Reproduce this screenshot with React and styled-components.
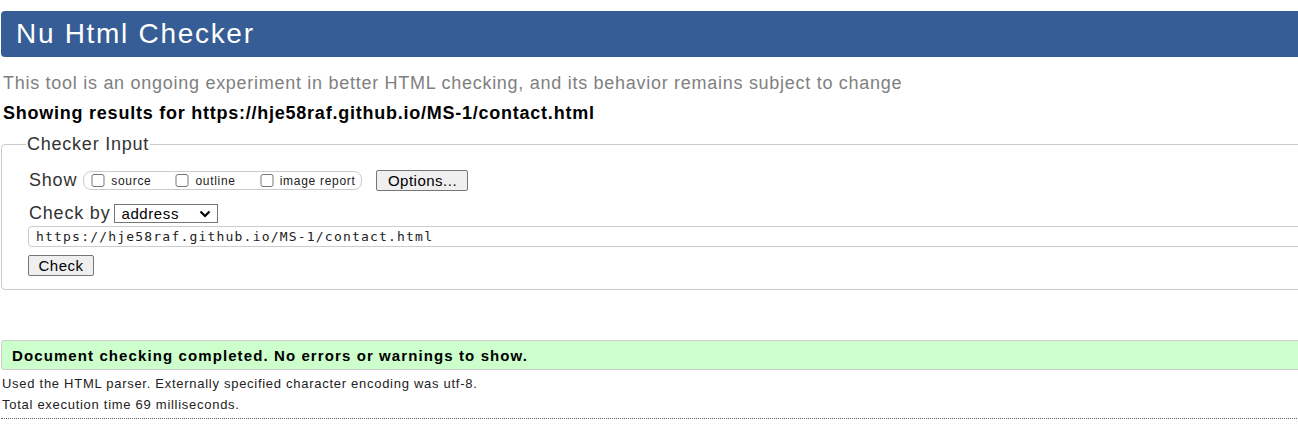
import styled, { createGlobalStyle } from "styled-components";

const GlobalStyle = createGlobalStyle`
  html, body {
    margin: 0;
    padding: 0;
    background: #fff;
    overflow: hidden;
  }
  body {
    font-family: "Liberation Sans", Arial, sans-serif;
    color: #000;
  }
`;

const chevron =
  "data:image/svg+xml;utf8," +
  encodeURIComponent(
    '<svg xmlns="http://www.w3.org/2000/svg" width="12" height="8" viewBox="0 0 12 8"><path d="M1.5 1.5 L6 6 L10.5 1.5" fill="none" stroke="#000" stroke-width="2.2"/></svg>'
  );

export default function App() {
  return (
    <>
      <GlobalStyle />
      <Page>
        <Header>
          <h1>Nu Html Checker</h1>
        </Header>
        <Intro>
          This tool is an ongoing experiment in better HTML checking, and its
          behavior remains subject to change
        </Intro>
        <ResultsFor>
          Showing results for https://hje58raf.github.io/MS-1/contact.html
        </ResultsFor>
        <InputFieldset>
          <legend>Checker Input</legend>
          <Row>
            <Label>Show</Label>
            <ShowGroup>
              <Check>
                <input type="checkbox" />
                source
              </Check>
              <Check>
                <input type="checkbox" />
                outline
              </Check>
              <Check>
                <input type="checkbox" />
                image report
              </Check>
            </ShowGroup>
            <Button $width={92}>Options...</Button>
          </Row>
          <Row $top={13} $gap={4}>
            <Label>Check by</Label>
            <Select defaultValue="address">
              <option value="address">address</option>
            </Select>
          </Row>
          <UrlInput defaultValue="https://hje58raf.github.io/MS-1/contact.html" />
          <Row $top={8}>
            <Button $width={66}>Check</Button>
          </Row>
        </InputFieldset>
        <Success>Document checking completed. No errors or warnings to show.</Success>
        <Details>
          <p>Used the HTML parser. Externally specified character encoding was utf-8.</p>
          <p>Total execution time 69 milliseconds.</p>
        </Details>
      </Page>
    </>
  );
}

const Page = styled.div`
  width: 1340px;
  padding: 11px 0 0 1px;
`;

const Header = styled.div`
  background-color: #365d95;
  height: 46px;
  border-radius: 4px;
  display: flex;
  align-items: center;
  padding-left: 15px;
  h1 {
    margin: 0;
    font-size: 28px;
    letter-spacing: 1.7px;
    font-weight: normal;
    color: #fff;
    line-height: 1;
  }
`;

const Intro = styled.p`
  margin: 16px 0 0 2px;
  font-size: 18px;
  line-height: 21px;
  letter-spacing: 0.72px;
  color: #808080;
`;

const ResultsFor = styled.p`
  margin: 9px 0 0 2px;
  font-size: 18px;
  line-height: 21px;
  letter-spacing: 0.76px;
  font-weight: bold;
  color: #000;
`;

const InputFieldset = styled.fieldset`
  margin: 10px 0 0 0;
  padding: 15px 0 13px 26px;
  border: 1px solid #ccc;
  border-radius: 4px;
  legend {
    font-size: 18px;
    line-height: 21px;
    letter-spacing: 0.77px;
    color: #333;
    padding: 0 1px;
    margin-left: -2px;
  }
`;

const Row = styled.div`
  display: flex;
  align-items: center;
  gap: ${(p) => (p.$gap ? p.$gap : 0)}px;
  margin-top: ${(p) => (p.$top ? p.$top : 0)}px;
`;

const Label = styled.span`
  font-size: 18px;
  line-height: 19px;
  letter-spacing: 0.8px;
  color: #333;
  margin-left: 1px;
`;

const ShowGroup = styled.div`
  box-sizing: border-box;
  display: flex;
  align-items: center;
  gap: 24px;
  border: 1px solid #ccc;
  border-radius: 8px;
  height: 19px;
  padding: 0 6px 0 7px;
  margin: 0 14px 0 6px;
`;

const Check = styled.label`
  display: flex;
  align-items: center;
  font-size: 12px;
  letter-spacing: 0.7px;
  color: #222;
  input {
    width: 14px;
    height: 13px;
    margin: 0 6px 0 0;
  }
`;

const Button = styled.button`
  box-sizing: border-box;
  font-family: "Liberation Sans", Arial, sans-serif;
  font-size: 15px;
  letter-spacing: 0.5px;
  color: #000;
  background: #efefef;
  border: 1px solid #767676;
  border-radius: 2px;
  width: ${(p) => p.$width}px;
  height: 21px;
  padding: 0;
  line-height: 17px;
`;

const Select = styled.select`
  box-sizing: border-box;
  appearance: none;
  font-family: "Liberation Sans", Arial, sans-serif;
  font-size: 15px;
  letter-spacing: 0.6px;
  width: 104px;
  height: 19px;
  border: 1px solid #767676;
  border-radius: 0;
  background: #fff url("${chevron}") no-repeat right 6px center;
  color: #000;
  padding: 0 0 0 6px;
  line-height: 17px;
`;

const UrlInput = styled.input`
  display: block;
  box-sizing: border-box;
  width: calc(100% - 1px);
  margin-top: 3px;
  height: 21px;
  border: 1px solid #ccc;
  border-radius: 4px;
  padding: 0 7px;
  font-family: "DejaVu Sans Mono", "Liberation Mono", monospace;
  font-size: 13px;
  letter-spacing: 1.2px;
  color: #222;
`;

const Success = styled.div`
  box-sizing: border-box;
  margin-top: 50px;
  background-color: #ccffcc;
  border: 1px solid #ccc;
  border-radius: 3px;
  height: 30px;
  display: flex;
  align-items: center;
  padding-left: 10px;
  font-size: 15px;
  letter-spacing: 1.1px;
  font-weight: bold;
`;

const Details = styled.div`
  margin-top: 3px;
  padding-bottom: 3px;
  border-bottom: 1px dotted #666;
  p {
    margin: 0 0 0 1px;
    font-size: 13px;
    line-height: 21px;
    letter-spacing: 0.72px;
    color: #222;
  }
`;
